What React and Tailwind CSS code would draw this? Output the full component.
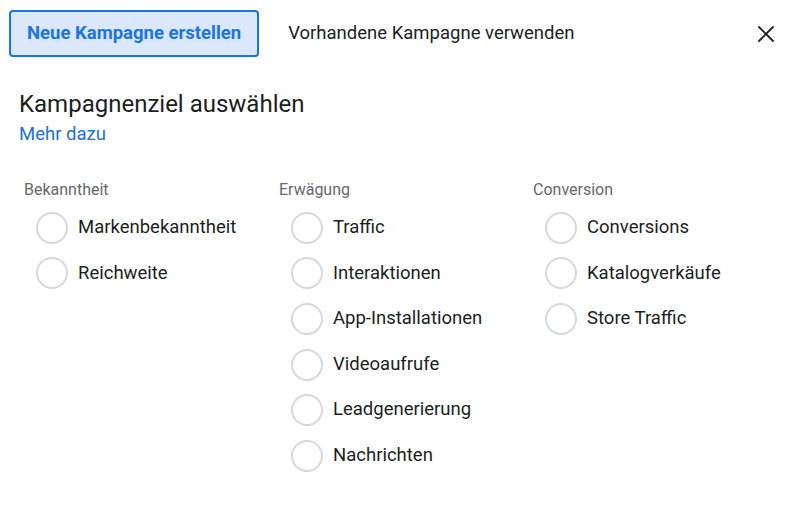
import React from "react";

const groups = [
  { title: "Bekanntheit", items: ["Markenbekanntheit", "Reichweite"] },
  {
    title: "Erwägung",
    items: [
      "Traffic",
      "Interaktionen",
      "App-Installationen",
      "Videoaufrufe",
      "Leadgenerierung",
      "Nachrichten",
    ],
  },
  { title: "Conversion", items: ["Conversions", "Katalogverkäufe", "Store Traffic"] },
];

export default function App() {
  return (
    <div
      className="w-[800px] h-[520px] bg-white text-[#1c1e21] overflow-hidden"
      style={{ fontFamily: "Roboto, 'Liberation Sans', sans-serif" }}
    >
      {/* Tabs */}
      <div className="flex items-center pl-[9px] pt-[10px] pr-[24px]">
        <button className="h-[47px] px-[16px] rounded-[4px] border-2 border-[#1b74e4] bg-[#dbe7fb] text-[#1b74e4] text-[18.5px] font-bold">
          Neue Kampagne erstellen
        </button>
        <span className="ml-[29px] text-[18.5px]">Vorhandene Kampagne verwenden</span>
        <button className="ml-auto w-[20px] h-[20px] flex items-center justify-center">
          <svg width="18" height="18" viewBox="0 0 18 18">
            <path d="M2 2 L16 16 M16 2 L2 16" stroke="#1c1e21" strokeWidth="1.8" strokeLinecap="round" />
          </svg>
        </button>
      </div>

      {/* Heading */}
      <div className="pl-[19px] mt-[32px]">
        <h1 className="text-[24px] leading-[30px]">Kampagnenziel auswählen</h1>
        <a className="block text-[18.5px] leading-[30px] text-[#216fdb]">Mehr dazu</a>
      </div>

      {/* Objective columns */}
      <div className="grid grid-cols-[255px_254px_1fr] pl-[24px] mt-[31px]">
        {groups.map((g) => (
          <div key={g.title}>
            <div className="text-[16px] leading-[20px] text-[#65676b]">{g.title}</div>
            <div className="mt-[5px] pl-[12px] flex flex-col">
              {g.items.map((item) => (
                <label key={item} className="h-[45.6px] flex items-center gap-[10px]">
                  <span className="w-[32px] h-[32px] rounded-full border-2 border-[#d5d8dc] shrink-0" />
                  <span className="text-[18.5px]">{item}</span>
                </label>
              ))}
            </div>
          </div>
        ))}
      </div>
    </div>
  );
}
